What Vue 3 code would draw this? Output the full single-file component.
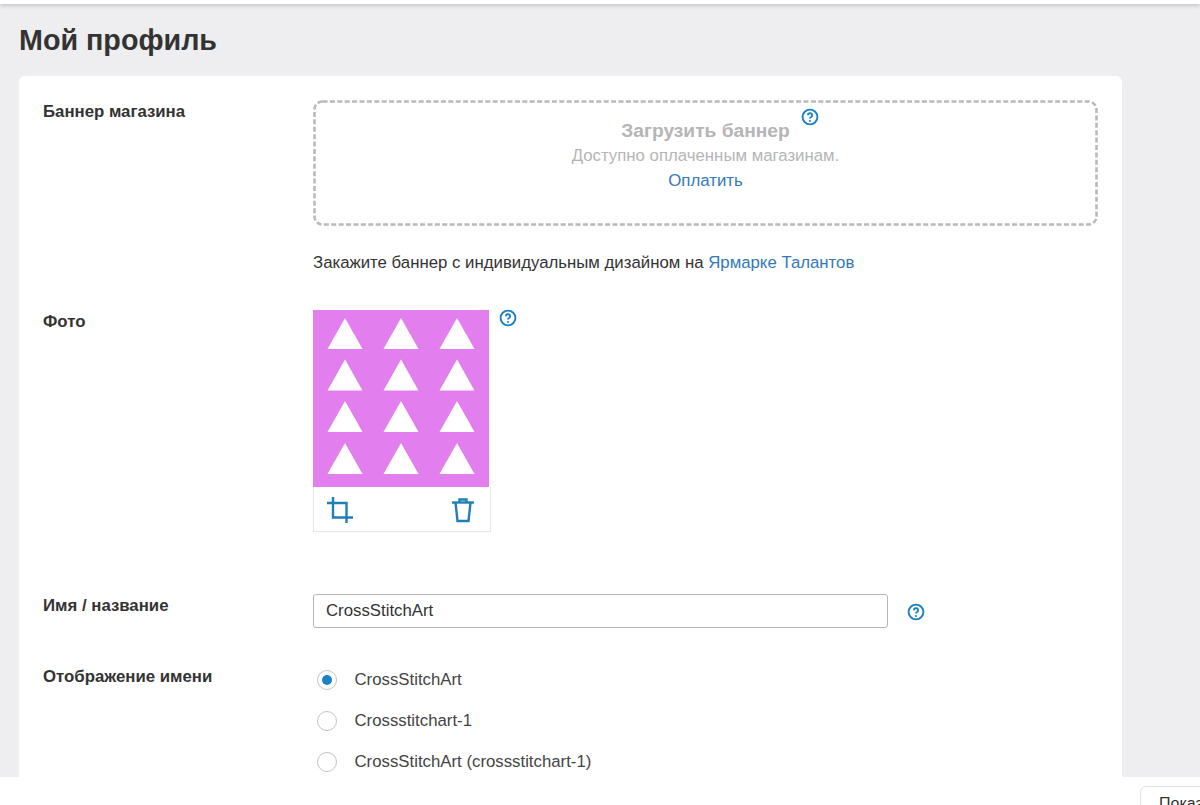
<template>
  <div class="page">
    <div class="top-bar"></div>
    <main class="content">
      <h1 class="page-title">Мой профиль</h1>
      <section class="card">
        <div class="form-row banner-row">
          <div class="row-label">Баннер магазина</div>
          <div class="row-body">
            <div class="dropzone">
              <svg class="drop-border" viewBox="0 0 785 126"><rect x="1.5" y="1.500" width="782" height="123" rx="8" /></svg>
              <div class="drop-title-wrap">
                <span class="drop-title">Загрузить баннер</span>
                <svg class="help help-banner" viewBox="0 0 18 18"><circle cx="9" cy="9" r="7.4" /><path d="M6.9 7.2a2.1 2.1 0 1 1 3.2 1.8c-.7.4-1.1.8-1.1 1.6" /><circle class="dot" cx="9" cy="12.9" r="1" /></svg>
              </div>
              <div class="drop-note">Доступно оплаченным магазинам.</div>
              <a class="link drop-link">Оплатить</a>
            </div>
            <p class="order-note">Закажите баннер с индивидуальным дизайном на <a class="link">Ярмарке Талантов</a></p>
          </div>
        </div>

        <div class="form-row photo-row">
          <div class="row-label">Фото</div>
          <div class="row-body photo-body">
            <div class="photo-frame">
              <svg class="photo" viewBox="0 0 176 177">
                <rect width="176" height="177" fill="#e37eee" />
                <polygon v-for="(t, i) in triangles" :key="i" :points="t" fill="#fff" />
              </svg>
              <div class="photo-tools">
                <svg class="tool" viewBox="0 0 28 28"><path d="M7 1v20.500h20" /><path d="M1 7h19.500v20" /></svg>
                <svg class="tool" viewBox="0 0 28 28"><path d="M3 6.500h22" /><path d="M10.500 6.500V3.500h7v3" /><path d="M6.500 6.500l2 18.500h11l2-18.500" /></svg>
              </div>
            </div>
            <svg class="help" viewBox="0 0 18 18"><circle cx="9" cy="9" r="7.4" /><path d="M6.9 7.2a2.1 2.1 0 1 1 3.2 1.8c-.7.4-1.1.8-1.1 1.6" /><circle class="dot" cx="9" cy="12.9" r="1" /></svg>
          </div>
        </div>

        <div class="form-row name-row">
          <div class="row-label">Имя / название</div>
          <div class="row-body name-body">
            <input class="text-input" type="text" value="CrossStitchArt" />
            <svg class="help" viewBox="0 0 18 18"><circle cx="9" cy="9" r="7.4" /><path d="M6.9 7.2a2.1 2.1 0 1 1 3.2 1.8c-.7.4-1.1.8-1.1 1.6" /><circle class="dot" cx="9" cy="12.9" r="1" /></svg>
          </div>
        </div>

        <div class="form-row display-row">
          <div class="row-label">Отображение имени</div>
          <div class="row-body radios">
            <div v-for="(opt, i) in nameOptions" :key="opt" class="radio-line">
              <span class="radio" :class="{ checked: i === 0 }"></span>
              <span>{{ opt }}</span>
            </div>
          </div>
        </div>
      </section>
    </main>
    <footer class="bottom-bar">
      <button class="show-btn" type="button">Показать</button>
    </footer>
  </div>
</template>

<script setup>
const nameOptions = ['CrossStitchArt', 'Crossstitchart-1', 'CrossStitchArt (crossstitchart-1)']

// треугольники на картинке-аватаре
const triangles = []
for (const base of [39, 80.5, 122, 164]) {
  for (const center of [32, 88, 144]) {
    triangles.push(`${center},${base - 31} ${center + 17.5},${base} ${center - 17.5},${base}`)
  }
}
</script>

<style>
html,
body {
  margin: 0;
  background: #fff;
}
</style>

<style scoped>
.page {
  width: 1200px;
  height: 805px;
  overflow: hidden;
  display: flex;
  flex-direction: column;
  font-family: "Liberation Sans", Arial, sans-serif;
  font-size: 16.8px;
  color: #333;
}

.top-bar {
  height: 4px;
  flex: none;
  background: #fff;
  box-shadow: 0 1px 5px rgba(0, 0, 0, 0.25);
  position: relative;
}

.content {
  flex: 1;
  min-height: 0;
  overflow: hidden;
  background: #eeedf0;
  padding: 0 78px 0 19px;
}

.page-title {
  margin: 0;
  height: 72px;
  line-height: 72px;
  font-size: 28.7px;
  font-weight: 700;
  color: #333;
}

.card {
  background: #fff;
  border-radius: 6px 6px 0 0;
  padding: 24px 24px 0;
  height: 720px;
}

.form-row {
  display: grid;
  grid-template-columns: 270px 1fr;
}

.row-label {
  font-weight: 700;
  line-height: 24px;
}

.banner-row {
  height: 210px;
}

.photo-row {
  height: 284px;
}

.name-row {
  height: 71px;
}

.dropzone {
  position: relative;
  box-sizing: border-box;
  width: 785px;
  height: 126px;
  text-align: center;
  color: #b5b5b5;
  padding-top: 19px;
}

.drop-border {
  position: absolute;
  inset: 0;
  width: 785px;
  height: 126px;
  fill: none;
  stroke: #b9b9b9;
  stroke-width: 2.6;
  stroke-dasharray: 5 2.4;
}

.drop-title-wrap {
  position: relative;
  display: inline-block;
  height: 24px;
  line-height: 24px;
}

.drop-title {
  font-size: 19.2px;
  font-weight: 700;
}

.help {
  width: 18px;
  height: 18px;
  flex: none;
  fill: none;
  stroke: #1a82c4;
  stroke-width: 1.9;
}

.help .dot {
  fill: #1a82c4;
  stroke: none;
}

.help-banner {
  position: absolute;
  left: 180px;
  top: -11px;
}

.drop-note {
  line-height: 26px;
}

.link {
  color: #337ab7;
  text-decoration: none;
}

.drop-link {
  display: block;
  line-height: 24px;
}

.order-note {
  margin: 25px 0 0;
  line-height: 24px;
}

.photo-body {
  display: flex;
  align-items: flex-start;
  gap: 8px;
}

.photo-frame {
  width: 178px;
  height: 222px;
}

.photo {
  display: block;
  width: 176px;
  height: 177px;
}

.photo-tools {
  box-sizing: border-box;
  height: 45px;
  display: flex;
  justify-content: space-between;
  padding: 9px 13px 0 12px;
  border: 1px solid #e6e6e6;
  border-top: 0;
}

.tool {
  width: 28px;
  height: 28px;
  fill: none;
  stroke: #1f7fb8;
  stroke-width: 2.4;
}

.photo-body > .help {
  margin-top: -1px;
}

.name-body {
  display: flex;
  align-items: center;
  align-self: start;
  gap: 19px;
}

.name-body > .help {
  margin-top: 1px;
}

.text-input {
  box-sizing: border-box;
  width: 575px;
  height: 34px;
  border: 1px solid #b5b5b5;
  border-radius: 3px;
  padding: 0 12px;
  font: inherit;
  color: #333;
  outline: none;
}

.radios {
  display: flex;
  flex-direction: column;
  gap: 19px;
  margin-top: 4px;
}

.radio-line {
  display: flex;
  align-items: center;
  gap: 17.5px;
  height: 22px;
  padding-left: 4px;
  color: #444;
}

.radio {
  box-sizing: border-box;
  width: 20px;
  height: 20px;
  border: 1px solid #c4c4c4;
  border-radius: 50%;
  position: relative;
}

.radio.checked::after {
  content: "";
  position: absolute;
  inset: 4px;
  border-radius: 50%;
  background: #1a82c4;
}

.bottom-bar {
  flex: none;
  height: 28px;
  display: flex;
  padding-left: 1140px;
  background: #fff;
}

.show-btn {
  margin-top: 9px;
  flex: none;
  width: 130px;
  height: 40px;
  border: 1px solid #e2e2e2;
  border-radius: 6px;
  background: #fff;
  font: inherit;
  font-size: 16px;
  color: #333;
  text-align: left;
  padding: 0 0 4px 18px;
  box-sizing: border-box;
}
</style>
